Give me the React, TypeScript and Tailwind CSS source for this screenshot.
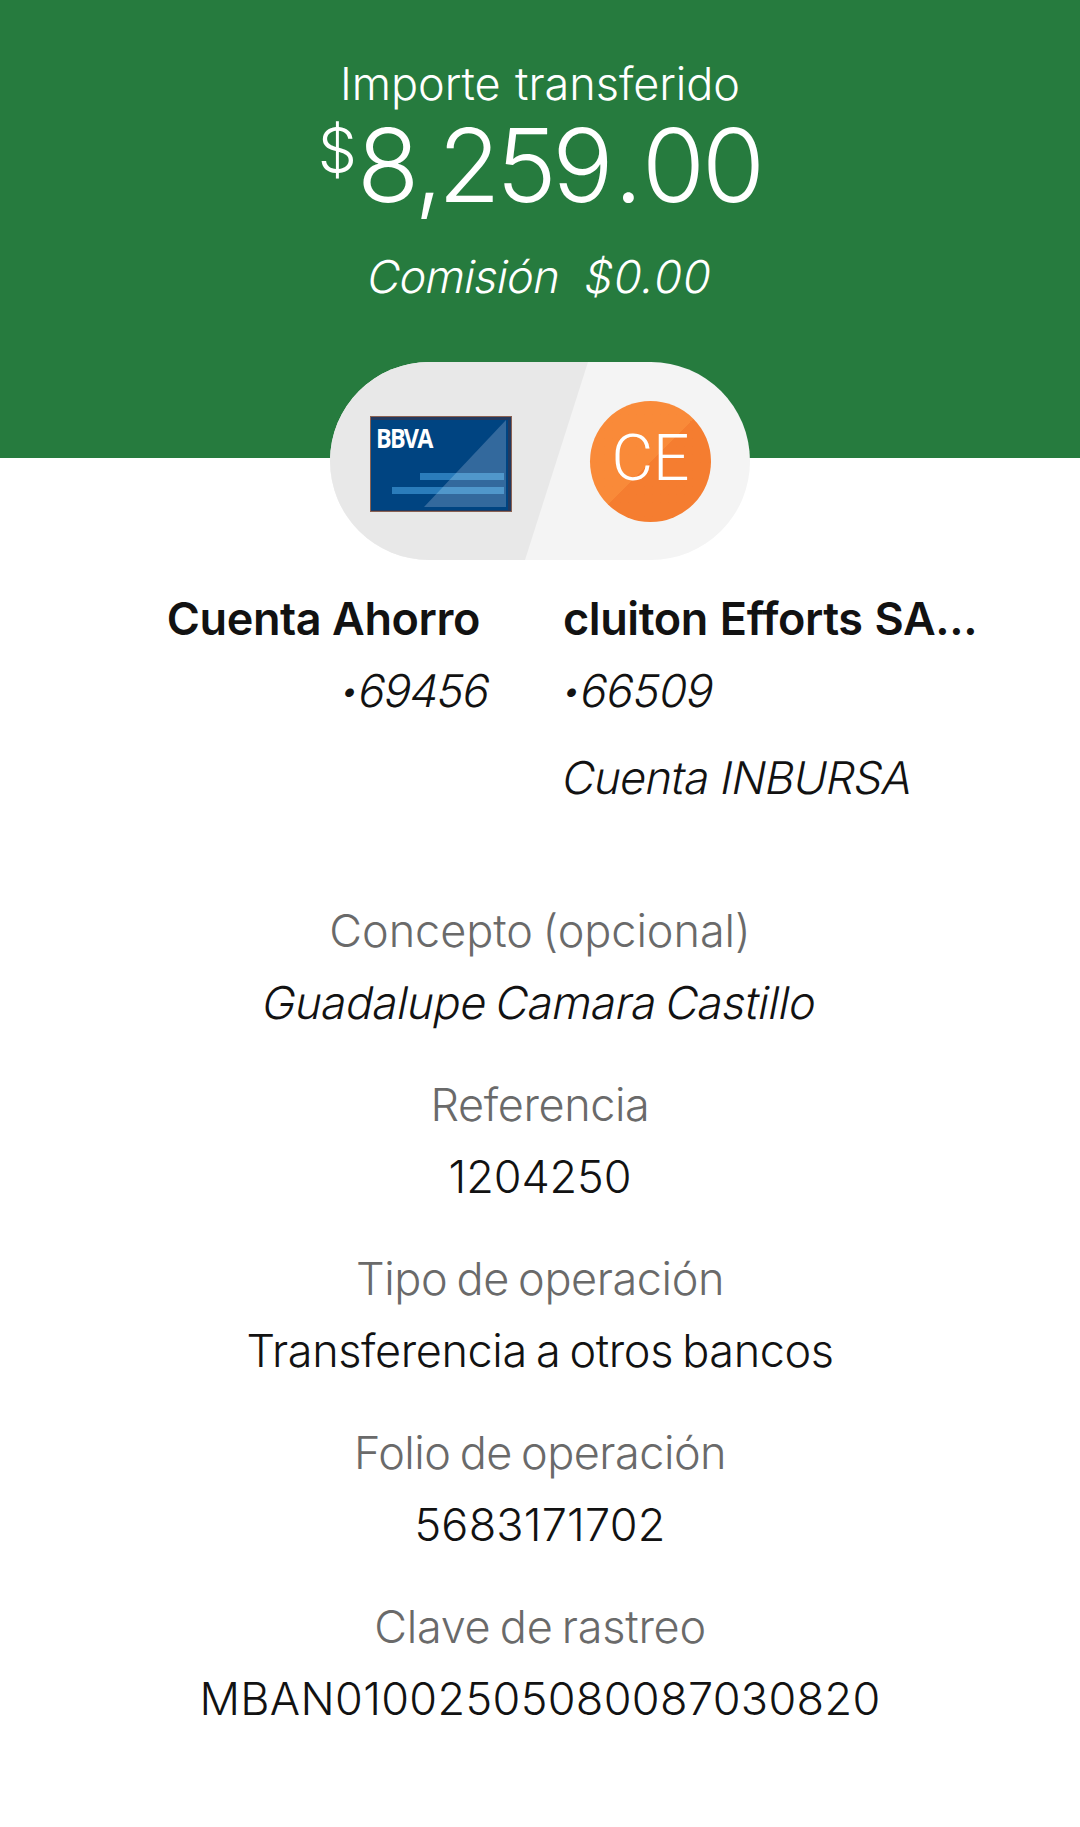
type Detail = {
  label: string;
  value: string;
  labelClass: string;
  valueClass: string;
};

const DETAILS: Detail[] = [
  {
    label: "Concepto (opcional)",
    value: "Guadalupe Camara Castillo",
    labelClass: "tracking-[-0.05px]",
    valueClass: "-skew-x-[11deg] tracking-[-0.3px]",
  },
  {
    label: "Referencia",
    value: "1204250",
    labelClass: "tracking-[-0.4px]",
    valueClass: "tracking-[-0.1px]",
  },
  {
    label: "Tipo de operación",
    value: "Transferencia a otros bancos",
    labelClass: "tracking-[-0.4px]",
    valueClass: "tracking-[-0.4px]",
  },
  {
    label: "Folio de operación",
    value: "5683171702",
    labelClass: "tracking-[-0.5px]",
    valueClass: "tracking-[0.2px]",
  },
  {
    label: "Clave de rastreo",
    value: "MBAN01002505080087030820",
    labelClass: "tracking-[-0.25px]",
    valueClass: "tracking-[0.35px]",
  },
];

const Header = () => (
  <header className="flex h-[458px] flex-col items-center bg-[#267b3e] pt-[54px] text-white">
    <p className="leading-[60px] tracking-[-0.05px] [word-spacing:2px]">Importe transferido</p>
    <p className="mt-px flex items-start leading-[100px]">
      <span className="text-[62px] leading-[70px]">$</span>
      <span className="text-[102px] tracking-[-2.9px]">
        8,<span className="-ml-0.5 tracking-[-4.5px]">259</span>
        <span className="mr-[2px] ml-[5px]">.</span>00
      </span>
    </p>
    <p className="mt-8 flex -skew-x-[11deg] gap-[25px] leading-[60px]">
      <span className="tracking-[-0.5px]">Comisión</span>
      <span className="tracking-[1px]">$0.00</span>
    </p>
  </header>
);

const BankCard = () => (
  <div className="relative h-[96px] w-[142px] shrink-0">
    <svg className="absolute inset-0" width="142" height="96" viewBox="0 0 142 96">
      <rect width="142" height="96" fill="#8a6152" />
      <rect x="1" y="1" width="140" height="94" fill="#23395e" />
      <rect x="1" y="4" width="137" height="90" fill="#004481" />
      <path d="M136 4V91H54Z" fill="#33699d" />
      <path d="M50 57H134V64H50ZM22 71H134V78H22Z" fill="#2a7cbb" />
      <path d="M86.1 57H134V64H79.5ZM72.9 71H134V78H66.3Z" fill="#5097cb" />
    </svg>
    <span className="absolute top-[8px] left-[6px] origin-left scale-x-90 font-['Open_Sans'] text-[26px] leading-[28px] font-bold tracking-[-2px] text-white">
      BBVA
    </span>
  </div>
);

const Accounts = () => (
  <div className="relative mx-auto -mt-[96px] flex h-[198px] w-[420px] items-center overflow-hidden rounded-full bg-[#f4f4f4]">
    <svg className="absolute inset-0" width="420" height="198" viewBox="0 0 420 198">
      <path d="M0 0H258L195 198H0Z" fill="#e8e8e8" />
    </svg>
    <div className="relative mt-[6px] ml-[40px] flex">
      <BankCard />
    </div>
    <div className="relative ml-[78px] flex size-[121px] items-center justify-center rounded-full bg-linear-135 from-[#f98a39] from-50% to-[#f57d30] to-50% pb-[4px] font-['Roboto'] text-[64px] leading-none text-white">
      CE
    </div>
  </div>
);

const App = () => {
  return (
    <div className="min-h-[1827px] w-[1080px] bg-white font-['Inter',sans-serif] text-[45px] leading-[72px] font-light whitespace-nowrap text-[#121212]">
      <Header />
      <Accounts />

      <div className="mt-[23px] grid grid-cols-[491px_1fr] gap-x-[72px]">
        <div className="flex flex-col items-end">
          <p className="mr-[11px] font-semibold tracking-[-0.4px]">Cuenta Ahorro</p>
          <p className="mr-[2px] -skew-x-[11deg]">
            <span className="relative -top-[5px] text-[32px] leading-none">•</span>
            <span className="tracking-[-1.2px]">69456</span>
          </p>
        </div>
        <div className="flex flex-col items-start">
          <p className="font-semibold tracking-[-0.4px] [word-spacing:1px]">cluiton Efforts SA...</p>
          <p className="-skew-x-[11deg]">
            <span className="relative -top-[5px] text-[32px] leading-none">•</span>
            <span className="tracking-[-0.6px]">66509</span>
          </p>
          <p className="mt-[15px] -skew-x-[11deg] tracking-[-0.65px]">Cuenta INBURSA</p>
        </div>
      </div>

      <dl className="mt-[81px] flex flex-col gap-[30px] [word-spacing:-3px]">
        {DETAILS.map((d) => (
          <div key={d.label} className="flex flex-col items-center">
            <dt className={`text-[#6a6a6a] ${d.labelClass}`}>{d.label}</dt>
            <dd className={d.valueClass}>{d.value}</dd>
          </div>
        ))}
      </dl>
    </div>
  );
};

export default App;
